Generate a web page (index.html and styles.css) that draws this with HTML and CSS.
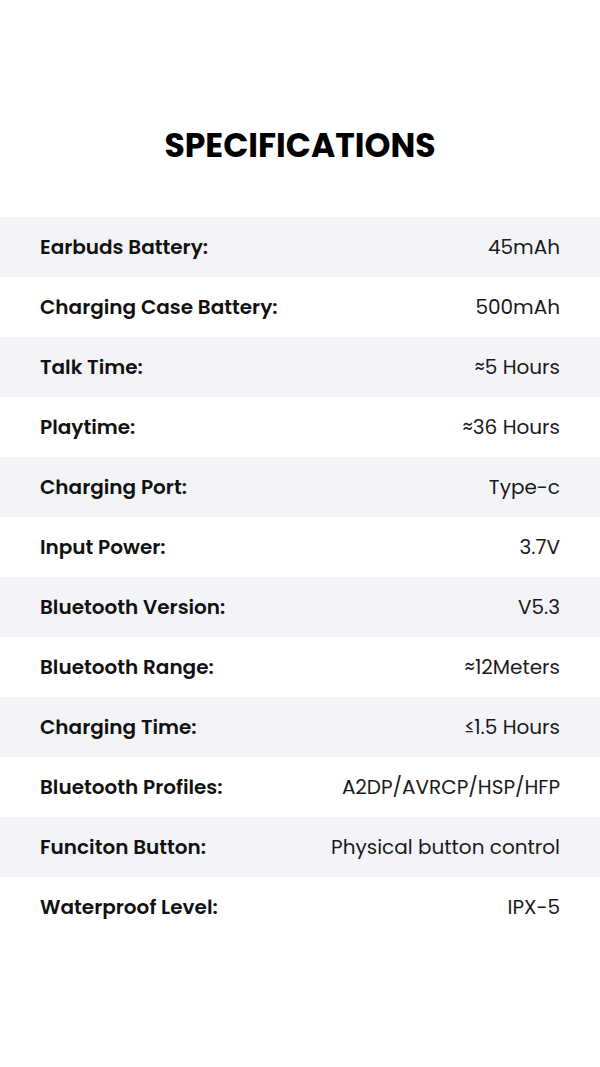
FILE: index.html
```html
<!DOCTYPE html>
<html lang="en">
<head>
  <meta charset="UTF-8" />
  <title>Specifications</title>
  <link rel="stylesheet" href="styles.css">
</head>
<body>

  <h1 class="title">SPECIFICATIONS</h1>

  <div class="specs">
    <div class="row"><span class="label">Earbuds Battery:</span><span class="value">45mAh</span></div>
    <div class="row"><span class="label">Charging Case Battery:</span><span class="value">500mAh</span></div>
    <div class="row"><span class="label">Talk Time:</span><span class="value">≈5 Hours</span></div>
    <div class="row"><span class="label">Playtime:</span><span class="value">≈36 Hours</span></div>
    <div class="row"><span class="label">Charging Port:</span><span class="value">Type-c</span></div>
    <div class="row"><span class="label">Input Power:</span><span class="value">3.7V</span></div>
    <div class="row"><span class="label">Bluetooth Version:</span><span class="value">V5.3</span></div>
    <div class="row"><span class="label">Bluetooth Range:</span><span class="value">≈12Meters</span></div>
    <div class="row"><span class="label">Charging Time:</span><span class="value">≤1.5 Hours</span></div>
    <div class="row"><span class="label">Bluetooth Profiles:</span><span class="value">A2DP/AVRCP/HSP/HFP</span></div>
    <div class="row"><span class="label">Funciton Button:</span><span class="value">Physical button control</span></div>
    <div class="row"><span class="label">Waterproof Level:</span><span class="value">IPX-5</span></div>
  </div>

</body>
</html>
```

FILE: styles.css
```css
body {
  font-family: 'Poppins', 'Inter', 'DejaVu Sans', sans-serif;
  background: #fff;
  margin: 0;
  color: #111;
}

.title {
  margin: 0 0 48px;
  padding-top: 123px;
  text-align: center;
  font-size: 33px;
  font-weight: 700;
  line-height: 46px;
  color: #000;
}

.specs {
  display: flex;
  flex-direction: column;
}

.row {
  display: flex;
  justify-content: space-between;
  align-items: center;
  height: 60px;
  padding: 0 40px;
  font-size: 20px;
}

.row:nth-child(odd) {
  background-color: #f3f4f8;
}

.label {
  font-weight: 600;
}

.value {
  font-weight: 400;
  color: #1a1a1a;
}
```
